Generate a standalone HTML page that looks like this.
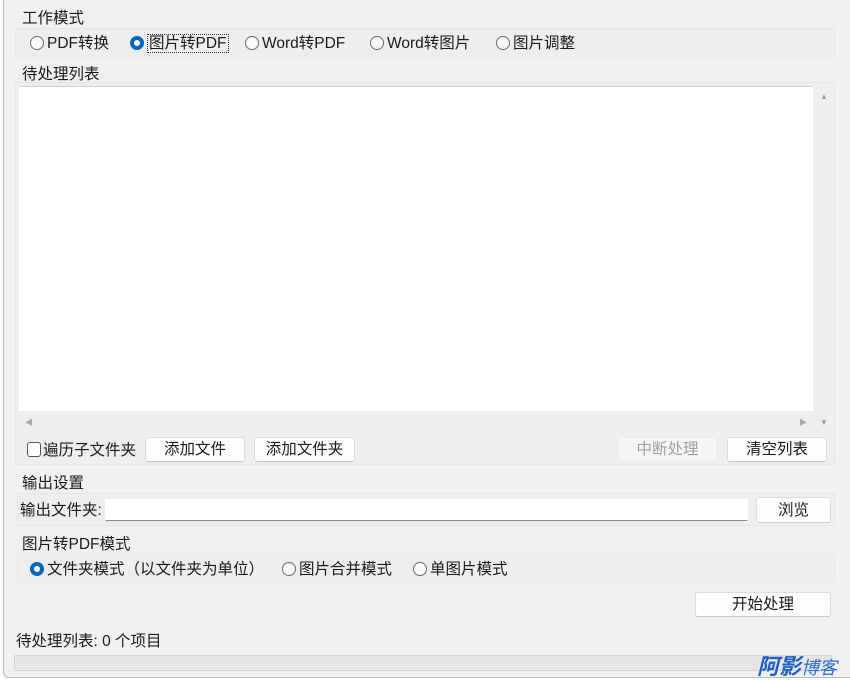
<!DOCTYPE html>
<html><head><meta charset="utf-8"><style>
*{box-sizing:border-box;margin:0;padding:0}
body{width:850px;height:680px;background:#fff;position:relative;overflow:hidden;font-family:"Liberation Sans","Noto Sans CJK SC",sans-serif;font-size:15.5px;color:#1a1a1a}
.win{position:absolute;left:3px;top:0;width:847px;height:678px;background:#f0f0f0;border-left:1px solid #b8b8b8;border-bottom:1px solid #b8b8b8;border-bottom-left-radius:6px}
.a{position:absolute;white-space:nowrap;line-height:18px}
.grp{position:absolute;border:1px solid #e6e6e6;border-radius:2px;background:#eeeeee}
.btn{position:absolute;background:#fdfdfd;border:1px solid #dcdcdc;border-bottom-color:#c8c8c8;border-radius:3px;text-align:center;line-height:23px;font-size:15.5px}
.r{display:inline-block;width:14px;height:14px;border:1px solid #6b6b6b;border-radius:50%;vertical-align:-2px;margin-right:3px;background:#fafafa}
.r.on{border:4px solid #0067c0;background:#fff}
</style></head><body>
<div class="win"></div>
<div class="grp" style="left:15px;top:28px;width:820px;height:30px"></div>
<div class="a" style="left:22px;top:10px">工作模式</div>
<div class="a" style="left:30px;top:35px"><span class="r"></span>PDF转换</div>
<div class="a" style="left:130px;top:35px"><span class="r on"></span><span style="border:1px dotted #333;padding:0 1px">图片转PDF</span></div>
<div class="a" style="left:245px;top:35px"><span class="r"></span>Word转PDF</div>
<div class="a" style="left:370px;top:35px"><span class="r"></span>Word转图片</div>
<div class="a" style="left:496px;top:35px"><span class="r"></span>图片调整</div>
<div class="grp" style="left:15px;top:82px;width:820px;height:383px"></div>
<div class="a" style="left:22px;top:66px">待处理列表</div>
<div style="position:absolute;left:19px;top:86px;width:794px;height:325px;background:#fff;border-top:1px solid #d0d0d0"></div>
<div class="a" style="left:820px;top:88px;font-size:8px;color:#999">▲</div>
<div class="a" style="left:820px;top:414px;font-size:8px;color:#999">▼</div>
<div class="a" style="left:25px;top:414px;font-size:8px;color:#aaa">◀</div>
<div class="a" style="left:799px;top:414px;font-size:8px;color:#aaa">▶</div>
<div class="a" style="left:27px;top:442px"><span style="display:inline-block;width:14px;height:15px;border:1px solid #555;border-radius:3px;vertical-align:-2px;background:#fff;margin-right:2px"></span>遍历子文件夹</div>
<div class="btn" style="left:145px;top:437px;width:100px;height:25px">添加文件</div>
<div class="btn" style="left:254px;top:437px;width:101px;height:25px">添加文件夹</div>
<div class="btn" style="left:618px;top:437px;width:99px;height:25px;color:#a0a0a0;background:#f5f5f5;border-color:#ebebeb">中断处理</div>
<div class="btn" style="left:727px;top:437px;width:100px;height:25px">清空列表</div>
<div class="grp" style="left:17px;top:493px;width:818px;height:33px"></div>
<div class="a" style="left:22px;top:475px">输出设置</div>
<div class="a" style="left:20px;top:502px">输出文件夹:</div>
<div style="position:absolute;left:105px;top:499px;width:643px;height:22px;background:#fff;border-bottom:1px solid #888;border-radius:2px"></div>
<div class="btn" style="left:756px;top:497px;width:75px;height:26px;line-height:25px">浏览</div>
<div class="grp" style="left:17px;top:553px;width:818px;height:30px"></div>
<div class="a" style="left:22px;top:536px">图片转PDF模式</div>
<div class="a" style="left:30px;top:561px"><span class="r on"></span>文件夹模式（以文件夹为单位）</div>
<div class="a" style="left:282px;top:561px"><span class="r"></span>图片合并模式</div>
<div class="a" style="left:413px;top:561px"><span class="r"></span>单图片模式</div>
<div class="btn" style="left:695px;top:592px;width:136px;height:25px">开始处理</div>
<div class="a" style="left:16px;top:633px">待处理列表: 0 个项目</div>
<div style="position:absolute;left:14px;top:655px;width:818px;height:16px;background:#e6e6e6;border:1px solid #d2d2d2;border-radius:2px"></div>
<div class="a" style="left:757px;top:655px;font-size:22px;font-weight:bold;font-style:italic;color:#1b5fc7;line-height:24px">阿影<span style="font-size:18px;font-weight:normal;color:#2a6fd0">博客</span></div>
</body></html>
